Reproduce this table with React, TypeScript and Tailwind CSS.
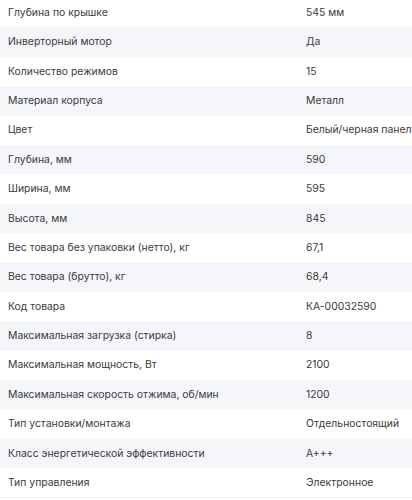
const specs: [string, string][] = [
  ["Глубина по крышке", "545 мм"],
  ["Инверторный мотор", "Да"],
  ["Количество режимов", "15"],
  ["Материал корпуса", "Металл"],
  ["Цвет", "Белый/черная панель"],
  ["Глубина, мм", "590"],
  ["Ширина, мм", "595"],
  ["Высота, мм", "845"],
  ["Вес товара без упаковки (нетто), кг", "67,1"],
  ["Вес товара (брутто), кг", "68,4"],
  ["Код товара", "КА-00032590"],
  ["Максимальная загрузка (стирка)", "8"],
  ["Максимальная мощность, Вт", "2100"],
  ["Максимальная скорость отжима, об/мин", "1200"],
  ["Тип установки/монтажа", "Отдельностоящий"],
  ["Класс энергетической эффективности", "А+++"],
  ["Тип управления", "Электронное"],
]

export default function App() {
  return (
    <div className="h-[500px] w-[412px] overflow-hidden bg-white font-['Inter',sans-serif] text-[10.4px] text-[#3b3b3b]">
      <div className="mt-[-2px] border-b border-[#eceef2]">
        {specs.map(([label, value], i) => (
          <div
            key={label}
            className={`flex h-[29.375px] items-center ${i % 2 === 1 ? "bg-[#f5f6f9]" : "bg-white"}`}
          >
            <div className="w-[306px] shrink-0 pl-2">{label}</div>
            <div className="whitespace-nowrap">{value}</div>
          </div>
        ))}
      </div>
    </div>
  )
}
